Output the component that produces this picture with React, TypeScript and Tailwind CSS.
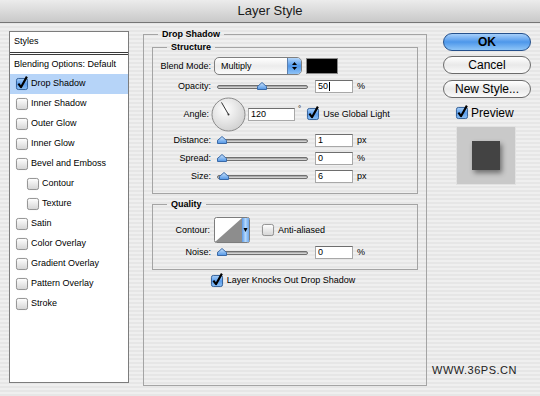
import clsx from "clsx";

const STYLE_ITEMS = [
  { label: "Drop Shadow", checked: true, active: true },
  { label: "Inner Shadow" },
  { label: "Outer Glow" },
  { label: "Inner Glow" },
  { label: "Bevel and Emboss" },
  { label: "Contour", sub: true },
  { label: "Texture", sub: true },
  { label: "Satin" },
  { label: "Color Overlay" },
  { label: "Gradient Overlay" },
  { label: "Pattern Overlay" },
  { label: "Stroke" },
];

function Check({ on, className }: { on?: boolean; className?: string }) {
  return (
    <svg width="12" height="12" viewBox="0 0 13 13" className={clsx("shrink-0 overflow-visible", className)}>
      <defs>
        <linearGradient id="cbOff" x1="0" y1="0" x2="0" y2="1">
          <stop offset="0" stopColor="#ffffff" />
          <stop offset="1" stopColor="#d4d4d4" />
        </linearGradient>
        <linearGradient id="cbOn" x1="0" y1="0" x2="0" y2="1">
          <stop offset="0" stopColor="#a9d0f8" />
          <stop offset="0.5" stopColor="#5b9ded" />
          <stop offset="1" stopColor="#8cc0f4" />
        </linearGradient>
      </defs>
      <rect x="0.5" y="0.5" width="12" height="12" rx="2" fill={on ? "url(#cbOn)" : "url(#cbOff)"} stroke={on ? "#2c5a94" : "#8a8a8a"} />
      {on && <path d="M2.6 6.2 L5.4 10 L11.8 -1.5" fill="none" stroke="#000" strokeWidth="2.3" strokeLinejoin="round" />}
    </svg>
  );
}

function Slider({ at }: { at: number }) {
  return (
    <div className="relative h-[10px] w-[91px] shrink-0">
      <div className="absolute left-0 right-0 top-[4px] h-[4px] rounded-full border border-[#6f6f6f] bg-linear-to-b from-[#9a9a9a] to-[#e4e4e4]" />
      <svg width="10" height="8" viewBox="0 0 10 8" className="absolute top-[1px]" style={{ left: at }}>
        <defs>
          <linearGradient id="thumb" x1="0" y1="0" x2="0" y2="1">
            <stop offset="0" stopColor="#cfe5fc" />
            <stop offset="1" stopColor="#4f95e6" />
          </linearGradient>
        </defs>
        <path d="M0.5 7.5 V4.5 L5 0.5 L9.5 4.5 V7.5 Z" fill="url(#thumb)" stroke="#3a6aa8" />
      </svg>
    </div>
  );
}

function Field({ value, w = 38, caret }: { value: string; w?: number; caret?: boolean }) {
  return (
    <div
      className="flex h-[13px] shrink-0 items-center border border-[#a8a8a8] border-t-[#6e6e6e] bg-white pl-[2px] text-[9px] leading-none"
      style={{ width: w }}
    >
      {value}
      {caret && <span className="ml-px h-[9px] w-px bg-black" />}
    </div>
  );
}

function Label({ children, w = 58 }: { children: React.ReactNode; w?: number }) {
  return (
    <div className="shrink-0 text-right text-[9px] leading-none" style={{ width: w }}>
      {children}
    </div>
  );
}

function SliderRow({ label, at, value, unit, h = 18, caret }: { label: string; at: number; value: string; unit: string; h?: number; caret?: boolean }) {
  return (
    <div className="flex items-center" style={{ height: h }}>
      <Label>{label}</Label>
      <div className="ml-[6px]">
        <Slider at={at} />
      </div>
      <div className="ml-[7px]">
        <Field value={value} caret={caret} />
      </div>
      <span className="ml-[4px] text-[9px] leading-none">{unit}</span>
    </div>
  );
}

function AquaButton({ children, primary }: { children: React.ReactNode; primary?: boolean }) {
  return (
    <div
      className={clsx(
        "flex h-[18px] items-center justify-center rounded-full border text-[12px] leading-none",
        primary
          ? "border-[#24508c] bg-linear-to-b from-[#a6cffa] via-[#4d97ea] to-[#8ec5f7] font-bold"
          : "border-[#6b6b6b] bg-linear-to-b from-[#ffffff] via-[#e9e9e9] to-[#fafafa]"
      )}
    >
      {children}
    </div>
  );
}

export default function App() {
  return (
    <div className="flex h-[396px] w-[540px] flex-col overflow-hidden bg-[repeating-linear-gradient(180deg,#efefef_0px,#efefef_2px,#e6e6e6_2px,#e6e6e6_4px)] font-['Liberation_Sans',Arial,sans-serif] text-black">
      {/* title bar */}
      <div className="flex h-[23px] shrink-0 items-center justify-center border-b border-[#767676] bg-linear-to-b from-[#ececec] to-[#c9c9c9] text-[13px] text-[#1a1a1a]">
        Layer Style
      </div>

      <div className="flex flex-1">
        {/* styles list */}
        <div className="ml-[9px] mt-[8px] flex h-[352px] w-[120px] shrink-0 flex-col border border-[#7c7c7c] bg-white">
          <div className="flex h-[20px] items-center pl-[4px] text-[9px]">Styles</div>
          <div className="h-[3px] border-y border-[#3a3a3a]" />
          <div className="flex h-[19px] items-center pl-[4px] text-[9px]">Blending Options: Default</div>
          {STYLE_ITEMS.map((it) => (
            <div
              key={it.label}
              className={clsx(
                "flex h-[20px] items-center gap-[3px] text-[9px]",
                it.sub ? "pl-[17px]" : "pl-[6px]",
                it.active && "bg-[#b6d4f8]"
              )}
            >
              <Check on={it.checked} />
              {it.label}
            </div>
          ))}
        </div>

        {/* drop shadow settings */}
        <fieldset className="ml-[14px] mt-[5px] h-[358px] w-[284px] shrink-0 border border-[#a4a4a4] px-[8px]">
          <legend className="ml-[6px] px-[4px] text-[9px] font-bold leading-[12px]">Drop Shadow</legend>

          <fieldset className="mt-px border border-[#a4a4a4] pb-[8px] pt-[4px]">
            <legend className="ml-[14px] px-[4px] text-[9px] font-bold leading-[12px]">Structure</legend>

            <div className="flex h-[18px] items-center">
              <Label>Blend Mode:</Label>
              <div className="ml-[3px] flex h-[18px] w-[88px] items-center overflow-hidden rounded-[5px] border border-[#7f7f7f] bg-linear-to-b from-[#ffffff] via-[#ececec] to-[#fbfbfb]">
                <span className="flex-1 pl-[6px] text-[9px] leading-none">Multiply</span>
                <div className="flex h-full w-[14px] flex-col items-center justify-center gap-[2px] border-l border-[#5a7fae] bg-linear-to-b from-[#b3d6fa] via-[#4f96e8] to-[#8fc3f6]">
                  <svg width="5" height="3" viewBox="0 0 5 3"><path d="M0 3 L2.5 0 L5 3 Z" fill="#000" /></svg>
                  <svg width="5" height="3" viewBox="0 0 5 3"><path d="M0 0 L2.5 3 L5 0 Z" fill="#000" /></svg>
                </div>
              </div>
              <div className="ml-[4px] h-[16px] w-[32px] border border-[#8a8a8a] bg-black" />
            </div>

            <SliderRow label="Opacity:" at={40} value="50" unit="%" h={22} caret />

            <div className="flex h-[34px] items-center">
              <Label w={56}>Angle:</Label>
              <svg width="35" height="35" viewBox="0 0 35 35" className="ml-[2px] shrink-0">
                <defs>
                  <radialGradient id="dial" cx="0.4" cy="0.35" r="0.7">
                    <stop offset="0" stopColor="#ffffff" />
                    <stop offset="1" stopColor="#cfcfcf" />
                  </radialGradient>
                </defs>
                <circle cx="17.5" cy="17.5" r="16.5" fill="url(#dial)" stroke="#8a8a8a" />
                <line x1="17.5" y1="17.5" x2="10.5" y2="5.4" stroke="#333" strokeWidth="1" />
                <circle cx="17.5" cy="17.5" r="1" fill="#333" />
              </svg>
              <div className="ml-[2px]">
                <Field value="120" w={47} />
              </div>
              <span className="ml-[3px] self-start pt-[8px] text-[8px] leading-none">°</span>
              <Check on className="ml-[6px]" />
              <span className="ml-[4px] text-[9px] leading-none">Use Global Light</span>
            </div>

            <SliderRow label="Distance:" at={0} value="1" unit="px" />
            <SliderRow label="Spread:" at={0} value="0" unit="%" />
            <SliderRow label="Size:" at={2} value="6" unit="px" />
          </fieldset>

          <fieldset className="mt-[4px] border border-[#a4a4a4] pb-[8px] pt-[7px]">
            <legend className="ml-[14px] px-[4px] text-[9px] font-bold leading-[12px]">Quality</legend>

            <div className="flex h-[26px] items-center">
              <Label w={57}>Contour:</Label>
              <svg width="36" height="26" viewBox="0 0 36 26" className="ml-[4px] shrink-0">
                <defs>
                  <linearGradient id="ctr" x1="0" y1="0" x2="1" y2="0">
                    <stop offset="0" stopColor="#5d9be8" />
                    <stop offset="0.5" stopColor="#b5d8fb" />
                    <stop offset="1" stopColor="#6aa6ec" />
                  </linearGradient>
                </defs>
                <rect x="0.5" y="0.5" width="35" height="25" rx="2" fill="#fff" stroke="#7d7d7d" />
                <path d="M1 25 L28 1 V25 Z" fill="#8d8d8d" />
                <rect x="28" y="1" width="7" height="24" fill="url(#ctr)" />
                <path d="M29.5 11 L33.5 11 L31.5 15 Z" fill="#000" />
              </svg>
              <Check className="ml-[12px]" />
              <span className="ml-[4px] text-[9px] leading-none">Anti-aliased</span>
            </div>

            <SliderRow label="Noise:" at={0} value="0" unit="%" />
          </fieldset>

          <div className="flex h-[21px] items-center justify-center gap-[4px] pr-[4px] text-[9px]">
            <Check on />
            Layer Knocks Out Drop Shadow
          </div>
        </fieldset>

        {/* buttons + preview */}
        <div className="ml-[16px] mt-[10px] flex w-[88px] shrink-0 flex-col">
          <AquaButton primary>OK</AquaButton>
          <div className="mt-[5px]">
            <AquaButton>Cancel</AquaButton>
          </div>
          <div className="mt-[6px]">
            <AquaButton>New Style...</AquaButton>
          </div>
          <div className="mt-[9px] flex items-center gap-[3px] pl-[13px] text-[12px] leading-none">
            <Check on />
            Preview
          </div>
          <div className="ml-[13px] mt-[7px] flex h-[59px] w-[60px] items-center justify-center border border-[#e2e2e2] bg-[#c9c9c9]">
            <div className="h-[29px] w-[28px] bg-[#434343] shadow-[2px_3px_5px_rgba(0,0,0,0.45)]" />
          </div>
          <div className="mt-auto mb-[18px] -ml-[11px] text-[11px] tracking-[0.5px] text-[#222]">WWW.36PS.CN</div>
        </div>
      </div>
    </div>
  );
}
